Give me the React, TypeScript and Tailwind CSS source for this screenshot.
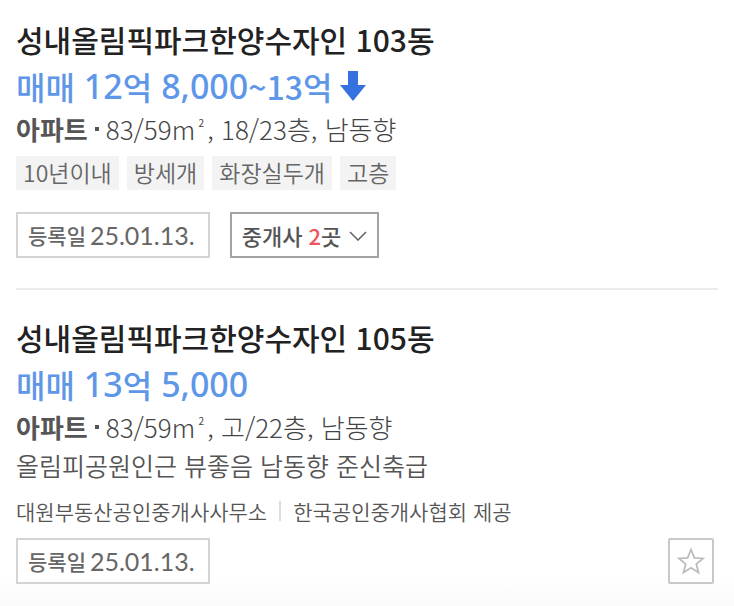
import type { ReactNode } from 'react';

function Title({ children }: { children: ReactNode }) {
  return <h2 className="text-[30px] leading-[46px] font-medium text-[#222]">{children}</h2>;
}

function Num({ children }: { children: ReactNode }) {
  return <span className="font-['Noto_Sans','Noto_Sans_CJK_KR',sans-serif] text-[34px]">{children}</span>;
}

function Price({ children }: { children: ReactNode }) {
  return (
    <p className="flex h-12 items-center text-[32px] leading-[50px] font-medium whitespace-pre text-[#5f97e8]">
      {children}
    </p>
  );
}

function Spec({ children }: { children: ReactNode }) {
  return (
    <p className="flex h-[38px] items-center text-[26px] leading-[38px] font-light whitespace-pre text-[#444]">
      <strong className="font-bold text-[#555]">아파트</strong>
      <span className="mx-[7px] size-1 bg-[#555]" />
      <span>{children}</span>
    </p>
  );
}

function Area() {
  return (
    <>
      83/59m<span className="inline-block w-3 text-center align-[13px] text-[10px] leading-none font-normal">2</span>
    </>
  );
}

function RegisteredDate() {
  return (
    <div className="flex h-[46px] items-center gap-1 border-2 border-[#d4d4d4] bg-white pr-[13px] pl-[10px] text-[21px] leading-[30px] text-[#666]">
      <span className="font-medium">등록일</span>
      <time dateTime="2025-01-13" className="font-['Lato',sans-serif] text-[25px]">
        25.01.13.
      </time>
    </div>
  );
}

const tags = ['10년이내', '방세개', '화장실두개', '고층'];

export default function App() {
  return (
    <main
      lang="ko"
      className="min-h-screen bg-gradient-to-b from-white from-[95%] to-[#fafafa] px-4 pt-4 pb-[22px] font-['Noto_Sans_CJK_KR',sans-serif]"
    >
      <article className="border-b-2 border-[#ebebeb] pb-[30px]">
        <Title>성내올림픽파크한양수자인 103동</Title>
        <Price>
          매매 <Num>12</Num>억 <Num>8,000</Num>~13억
          <svg className="ml-2 h-[30px] w-[26px]" viewBox="0 0 26 30" role="img" aria-label="하락">
            <path d="M8 0h10v14h8L13 30 0 14h8z" fill="#3572df" />
          </svg>
        </Price>
        <Spec>
          <Area />, 18/23층, 남동향
        </Spec>
        <ul className="mt-2 flex gap-2">
          {tags.map((tag) => (
            <li key={tag} className="h-[34px] bg-[#f3f3f3] px-[7px] text-[23px] leading-[32px] font-[350] text-[#666]">
              {tag}
            </li>
          ))}
        </ul>
        <div className="mt-[22px] flex gap-5">
          <RegisteredDate />
          <button
            type="button"
            className="flex h-[46px] items-center border-2 border-[#a3a3a3] bg-white px-[10px] text-[22px] leading-8 font-medium text-[#555]"
          >
            <span>
              중개사 <span className="text-[#ee555b]">2</span>곳
            </span>
            <svg className="ml-2 h-3 w-[18px]" viewBox="0 0 18 12" fill="none" stroke="#666" strokeWidth="1.6" aria-hidden="true">
              <path d="M1 3l8 8 8-8" />
            </svg>
          </button>
        </div>
      </article>

      <article className="pt-6">
        <Title>성내올림픽파크한양수자인 105동</Title>
        <Price>
          매매 <Num>13</Num>억 <Num>5,000</Num>
        </Price>
        <Spec>
          <Area />, 고/22층, 남동향
        </Spec>
        <p className="text-[25px] leading-[38px] font-[350] text-[#555]">올림피공원인근 뷰좋음 남동향 준신축급</p>
        <p className="mt-[10px] flex items-center text-[21px] leading-[34px] font-[350] text-[#555]">
          <span>대원부동산공인중개사사무소</span>
          <span className="mx-3 h-5 w-[2px] bg-[#ddd]" />
          <span>한국공인중개사협회 제공</span>
        </p>
        <div className="mt-[10px] flex items-center justify-between pr-1">
          <RegisteredDate />
          <button
            type="button"
            aria-label="관심매물"
            className="flex size-[46px] items-center justify-center rounded-[2px] border-2 border-[#c8c8c8] bg-white"
          >
            <svg className="size-7" viewBox="0 0 28 28" fill="none" stroke="#bdbdbd" strokeWidth="1.8" aria-hidden="true">
              <path d="M14 2.5l3.4 8.3 8.6.6-6.7 5.6 2.2 8.5L14 20.8l-7.5 4.7 2.2-8.5L2 11.4l8.6-.6z" />
            </svg>
          </button>
        </div>
      </article>
    </main>
  );
}
